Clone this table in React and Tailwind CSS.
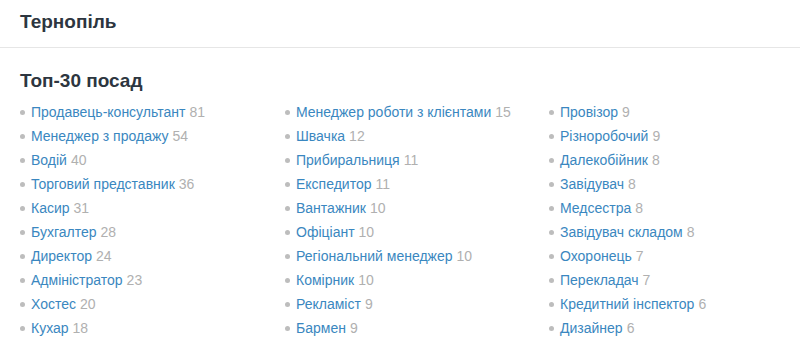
const cols = [
  [
    ["Продавець-консультант", 81],
    ["Менеджер з продажу", 54],
    ["Водій", 40],
    ["Торговий представник", 36],
    ["Касир", 31],
    ["Бухгалтер", 28],
    ["Директор", 24],
    ["Адміністратор", 23],
    ["Хостес", 20],
    ["Кухар", 18],
  ],
  [
    ["Менеджер роботи з клієнтами", 15],
    ["Швачка", 12],
    ["Прибиральниця", 11],
    ["Експедитор", 11],
    ["Вантажник", 10],
    ["Офіціант", 10],
    ["Регіональний менеджер", 10],
    ["Комірник", 10],
    ["Рекламіст", 9],
    ["Бармен", 9],
  ],
  [
    ["Провізор", 9],
    ["Різноробочий", 9],
    ["Далекобійник", 8],
    ["Завідувач", 8],
    ["Медсестра", 8],
    ["Завідувач складом", 8],
    ["Охоронець", 7],
    ["Перекладач", 7],
    ["Кредитний інспектор", 6],
    ["Дизайнер", 6],
  ],
];

export default function App() {
  return (
    <div className="w-[800px] h-[354px] bg-white overflow-hidden" style={{ fontFamily: '"Liberation Sans", Arial, sans-serif' }}>
      <div className="h-[48px] border-b border-[#e6e6e6] pl-[20px] pt-[9px]">
        <h1 className="text-[19px] leading-[26px] font-bold text-[#2d3640]">Тернопіль</h1>
      </div>
      <div className="pl-[20px] pt-[20px]">
        <h2 className="text-[19px] leading-[26px] font-bold text-[#2d3640]">Топ-30 посад</h2>
        <div className="grid grid-cols-[265px_264px_1fr] mt-[6px]">
          {cols.map((col, i) => (
            <ul key={i} className="flex flex-col">
              {col.map(([name, n]) => (
                <li key={name} className="flex items-center h-[24px] text-[14px]">
                  <span className="w-[5px] h-[5px] rounded-full bg-[#bdbdbd] mr-[6px] shrink-0" />
                  <span className="text-[#3a87c0]">{name}</span>
                  <span className="text-[#b0b0b0] ml-[4px]">{n}</span>
                </li>
              ))}
            </ul>
          ))}
        </div>
      </div>
    </div>
  );
}
